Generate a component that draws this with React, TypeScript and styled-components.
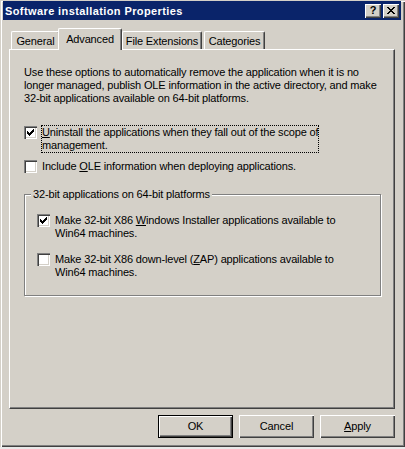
import React from 'react';
import styled, { createGlobalStyle } from 'styled-components';

const face = '#D4D0C8';
const shadow = '#808080';
const dark = '#404040';

const GlobalStyle = createGlobalStyle`
  html, body { margin: 0; padding: 0; background: #e9e9e9; }
  body { font-family: "Liberation Sans", Arial, sans-serif; font-size: 11px; letter-spacing: -0.15px; color: #000; }
  * { box-sizing: border-box; }
`;

const Window = styled.div`
  width: 405px; height: 447px; background: ${face};
  box-shadow: inset 1px 1px ${face}, inset 2px 2px #fff, inset -1px -1px ${dark}, inset -2px -2px ${shadow};
  display: flex; flex-direction: column;
  padding: 1px 4px 0 3px;
`;

const TitleBar = styled.div`
  height: 19px; background: #0A246A; display: flex; align-items: center; padding: 0 2px;
`;

const Title = styled.span`
  flex: 1; color: #fff; font-weight: bold; font-size: 11px; letter-spacing: 0.4px; white-space: nowrap;
`;

const CaptionButton = styled.div<{ $gap?: boolean }>`
  width: 16px; height: 14px; background: ${face}; margin-left: ${({ $gap }) => ($gap ? 2 : 0)}px;
  box-shadow: inset 1px 1px #fff, inset -1px -1px ${dark}, inset -2px -2px ${shadow};
  display: flex; align-items: center; justify-content: center;
  font-weight: bold; font-size: 11px; line-height: 1; padding-bottom: 1px;
`;

const Body = styled.div`
  display: flex; flex-direction: column; padding: 0 6px; margin-top: 8px;
`;

const TabRow = styled.div`
  display: flex; align-items: flex-end; height: 21px; padding-left: 2px; position: relative; z-index: 1;
`;

const Tab = styled.div<{ $active?: boolean; $w: number; $mr?: number }>`
  width: ${({ $w }) => $w}px;
  height: ${({ $active }) => ($active ? 22 : 18)}px;
  margin-bottom: ${({ $active }) => ($active ? -1 : 0)}px;
  margin-left: ${({ $active }) => ($active ? -2 : 0)}px;
  margin-right: ${({ $mr }) => $mr ?? 0}px;
  position: relative; z-index: ${({ $active }) => ($active ? 2 : 1)};
  background: ${face};
  border-left: 1px solid #fff; border-top: 1px solid #fff; border-right: 1px solid ${dark};
  border-top-left-radius: 2px; border-top-right-radius: 2px;
  box-shadow: inset -1px 0 ${shadow};
  display: flex; justify-content: center;
  padding-top: ${({ $active }) => ($active ? 4 : 3)}px;
  line-height: 13px; white-space: nowrap;
`;

const Panel = styled.div`
  height: 360px; background: ${face};
  border-left: 1px solid #fff; border-top: 1px solid #fff;
  border-right: 1px solid ${dark}; border-bottom: 1px solid ${dark};
  box-shadow: inset -1px -1px ${shadow};
  padding: 16px 14px 0 14px;
  display: flex; flex-direction: column;
`;

const Description = styled.p`
  margin: 0; line-height: 13px; white-space: nowrap;
`;

const Options = styled.div<{ $top: number; $gap: number }>`
  display: flex; flex-direction: column; margin-top: ${({ $top }) => $top}px; gap: ${({ $gap }) => $gap}px;
`;

const CheckRow = styled.div`
  display: flex; align-items: flex-start; gap: 4px;
`;

const Box = styled.span`
  width: 13px; height: 13px; flex: none; background: #fff; display: block;
  box-shadow: inset 1px 1px ${shadow}, inset 2px 2px ${dark}, inset -1px -1px #fff, inset -2px -2px ${face};
  svg { display: block; }
`;

const Label = styled.span<{ $focus?: boolean }>`
  margin: -1px 0; line-height: 13px; white-space: nowrap;
  border: 1px ${({ $focus }) => ($focus ? 'dotted #000' : 'solid transparent')};
`;

const GroupBox = styled.fieldset`
  margin: 15px 0 0 0; width: 357px; min-width: 0;
  border: 1px solid ${shadow};
  box-shadow: inset 1px 1px #fff, 1px 1px #fff;
  padding: 14px 12px 16px 12px;
`;

const Legend = styled.legend`
  padding: 0 2px; margin-left: -6px; line-height: 12px; background: ${face}; white-space: nowrap;
`;

const ButtonRow = styled.div`
  display: flex; justify-content: flex-end; gap: 6px; margin-top: 6px;
`;

const Button = styled.div<{ $default?: boolean }>`
  width: 75px; height: 23px; background: ${face};
  border: ${({ $default }) => ($default ? '1px solid #000' : 'none')};
  box-shadow: inset 1px 1px #fff, inset -1px -1px ${dark}, inset -2px -2px ${shadow};
  display: flex; align-items: center; justify-content: center; line-height: 13px;
`;

const checkPath =
  'M3 5h1v3h-1z M4 6h1v3h-1z M5 7h1v3h-1z M6 6h1v3h-1z M7 5h1v3h-1z M8 4h1v3h-1z M9 3h1v3h-1z';

const CheckBox = ({ checked }: { checked?: boolean }) => (
  <Box>
    {checked && (
      <svg width="13" height="13" viewBox="0 0 13 13" shapeRendering="crispEdges">
        <path d={checkPath} fill="#000" />
      </svg>
    )}
  </Box>
);

const CloseGlyph = () => (
  <svg width="8" height="7" viewBox="0 0 8 7" shapeRendering="crispEdges">
    <path
      d="M0 0h2v1h-2z M1 1h2v1h-2z M2 2h4v1h-4z M3 3h2v1h-2z M2 4h4v1h-4z M1 5h2v1h-2z M0 6h2v1h-2z M6 0h2v1h-2z M5 1h2v1h-2z M5 5h2v1h-2z M6 6h2v1h-2z"
      fill="#000"
    />
  </svg>
);

export default function App() {
  return (
    <>
      <GlobalStyle />
      <Window>
        <TitleBar>
          <Title>Software installation Properties</Title>
          <CaptionButton>?</CaptionButton>
          <CaptionButton $gap>
            <CloseGlyph />
          </CaptionButton>
        </TitleBar>
        <Body>
          <TabRow>
            <Tab $w={49}>General</Tab>
            <Tab $w={64} $active>Advanced</Tab>
            <Tab $w={80} $mr={2}>File Extensions</Tab>
            <Tab $w={61}>Categories</Tab>
          </TabRow>
          <Panel>
            <Description>
              Use these options to automatically remove the application when it is no
              <br />
              longer managed, publish OLE information in the active directory, and make
              <br />
              32-bit applications available on 64-bit platforms.
            </Description>
            <Options $top={21} $gap={8}>
              <CheckRow>
                <CheckBox checked />
                <Label $focus>
                  <u>U</u>ninstall the applications when they fall out of the scope of
                  <br />
                  management.
                </Label>
              </CheckRow>
              <CheckRow>
                <CheckBox />
                <Label>
                  Include <u>O</u>LE information when deploying applications.
                </Label>
              </CheckRow>
            </Options>
            <GroupBox>
              <Legend>32-bit applications on 64-bit platforms</Legend>
              <Options $top={0} $gap={13}>
                <CheckRow>
                  <CheckBox checked />
                  <Label>
                    Make 32-bit X86 <u>W</u>indows Installer applications available to
                    <br />
                    Win64 machines.
                  </Label>
                </CheckRow>
                <CheckRow>
                  <CheckBox />
                  <Label>
                    Make 32-bit X86 down-level (<u>Z</u>AP) applications available to
                    <br />
                    Win64 machines.
                  </Label>
                </CheckRow>
              </Options>
            </GroupBox>
          </Panel>
          <ButtonRow>
            <Button $default>OK</Button>
            <Button>Cancel</Button>
            <Button>
              <u>A</u>pply
            </Button>
          </ButtonRow>
        </Body>
      </Window>
    </>
  );
}
